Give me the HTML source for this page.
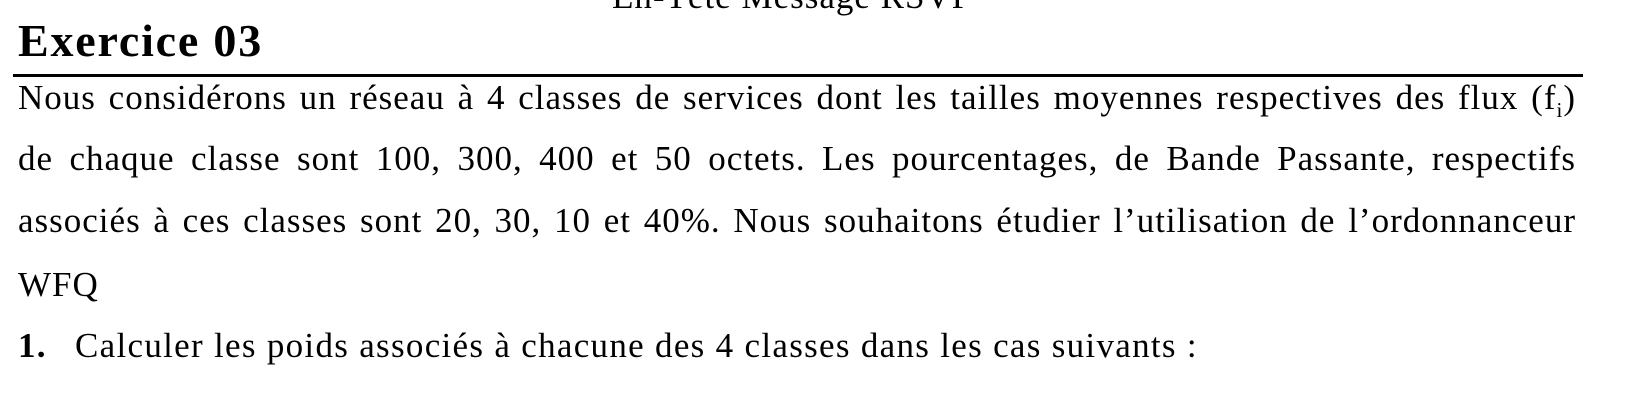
<!DOCTYPE html>
<html><head><meta charset="utf-8"><style>
html,body{margin:0;padding:0;background:#fff;}
body{width:1626px;height:412px;position:relative;overflow:hidden;font-family:"Liberation Serif",serif;color:#000;}
.hdr{position:absolute;left:612px;top:-23px;font-size:35px;letter-spacing:1px;white-space:nowrap;}
.h{position:absolute;left:18px;top:14px;font-size:46px;font-weight:bold;letter-spacing:1.8px;}
.rule{position:absolute;left:13px;top:74px;width:1570px;height:3px;background:#000;}
.l{position:absolute;left:18px;width:1558px;font-size:35px;letter-spacing:1px;white-space:nowrap;text-align:justify;text-align-last:justify;}
.n{text-align:left;text-align-last:left;}
</style></head><body>
<div class="hdr">En-Tête Message RSVP</div>
<div class="h">Exercice 03</div>
<div class="rule"></div>
<div class="l" style="top:78px">Nous considérons un réseau à 4 classes de services dont les tailles moyennes respectives des flux (f<sub style="font-size:21px">i</sub>)</div>
<div class="l" style="top:139px">de chaque classe sont 100, 300, 400 et 50 octets. Les pourcentages, de Bande Passante, respectifs</div>
<div class="l" style="top:201px">associés à ces classes sont 20, 30, 10 et 40%. Nous souhaitons étudier l’utilisation de l’ordonnanceur</div>
<div class="l n" style="top:265px">WFQ</div>
<div class="l n" style="top:326px;letter-spacing:1.3px"><span style="font-weight:bold;display:inline-block;width:57px">1.</span>Calculer les poids associés à chacune des 4 classes dans les cas suivants :</div>
</body></html>
